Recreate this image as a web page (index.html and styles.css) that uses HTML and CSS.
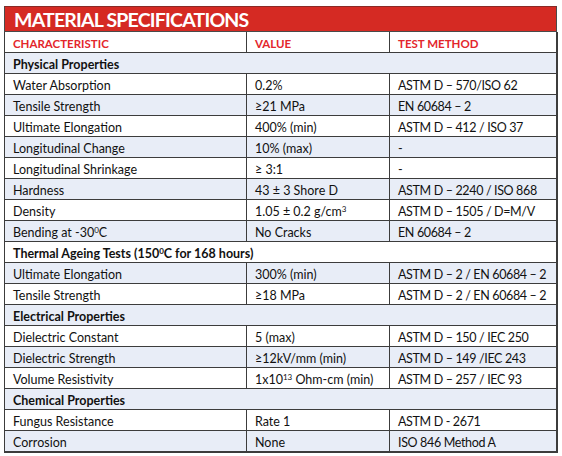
FILE: index.html
```html
<!DOCTYPE html>
<html>
<head>
<meta charset="utf-8">
<link rel="stylesheet" href="styles.css">
</head>
<body>
<div class="spec">
  <div class="title">MATERIAL SPECIFICATIONS</div>
  <div class="grid">
    <div class="cell head">CHARACTERISTIC</div><div class="cell head">VALUE</div><div class="cell head last">TEST METHOD</div>

    <div class="cell section blue">Physical Properties</div>
    <div class="cell">Water Absorption</div><div class="cell">0.2%</div><div class="cell last">ASTM D – 570/ISO 62</div>
    <div class="cell blue">Tensile Strength</div><div class="cell blue">≥21 MPa</div><div class="cell blue last">EN 60684 – 2</div>
    <div class="cell">Ultimate Elongation</div><div class="cell">400% (min)</div><div class="cell last">ASTM D – 412 / ISO 37</div>
    <div class="cell blue">Longitudinal Change</div><div class="cell blue">10% (max)</div><div class="cell blue last">-</div>
    <div class="cell">Longitudinal Shrinkage</div><div class="cell">≥ 3:1</div><div class="cell last">-</div>
    <div class="cell blue">Hardness</div><div class="cell blue">43 ± 3 Shore D</div><div class="cell blue last">ASTM D – 2240 / ISO 868</div>
    <div class="cell">Density</div><div class="cell">1.05 ± 0.2 g/cm<sup>3</sup></div><div class="cell last">ASTM D – 1505 / D=M/V</div>
    <div class="cell blue">Bending at -30<sup>0</sup>C</div><div class="cell blue">No Cracks</div><div class="cell blue last">EN 60684 – 2</div>

    <div class="cell section">Thermal Ageing Tests (150<sup>0</sup>C for 168 hours)</div>
    <div class="cell blue">Ultimate Elongation</div><div class="cell blue">300% (min)</div><div class="cell blue last">ASTM D – 2 / EN 60684 – 2</div>
    <div class="cell">Tensile Strength</div><div class="cell">≥18 MPa</div><div class="cell last">ASTM D – 2 / EN 60684 – 2</div>

    <div class="cell section blue">Electrical Properties</div>
    <div class="cell">Dielectric Constant</div><div class="cell">5 (max)</div><div class="cell last">ASTM D – 150 / IEC 250</div>
    <div class="cell blue">Dielectric Strength</div><div class="cell blue">≥12kV/mm (min)</div><div class="cell blue last">ASTM D – 149 /IEC 243</div>
    <div class="cell">Volume Resistivity</div><div class="cell">1x10<sup>13</sup> Ohm-cm (min)</div><div class="cell last">ASTM D – 257 / IEC 93</div>

    <div class="cell section blue">Chemical Properties</div>
    <div class="cell">Fungus Resistance</div><div class="cell">Rate 1</div><div class="cell last">ASTM D - 2671</div>
    <div class="cell blue bottom">Corrosion</div><div class="cell blue bottom">None</div><div class="cell blue last bottom">ISO 846 Method A</div>
  </div>
</div>
</body>
</html>
```

FILE: styles.css
```css
* { box-sizing: border-box; }
html, body { margin: 0; padding: 0; background: #ffffff; }
body {
  font-family: Lato, "Open Sans", "Liberation Sans", sans-serif;
  color: #111111;
}
.spec {
  margin: 6px 0 0 4px;
  width: 553px;
}
.title {
  height: 26px;
  background: #d52a23;
  color: #ffffff;
  font-weight: 700;
  font-size: 19.5px;
  letter-spacing: -0.8px;
  line-height: 25px;
  padding-left: 9px;
  border: 1px solid #4a4a4a;
  border-top-color: #8a2a26;
}
.grid {
  display: grid;
  grid-template-columns: 242px 143px 168px;
  border-left: 1px solid #3c3c3c;
}
.cell {
  height: 21px;
  line-height: 21px;
  padding-top: 1px;
  font-size: 12.5px;
  padding-left: 8px;
  border-right: 1px solid #3c3c3c;
  border-bottom: 1px solid #3c3c3c;
  white-space: nowrap;
  background: #ffffff;
}
.cell.last {
  border-right: 2px solid #3c3c3c;
  letter-spacing: -0.35px;
}
.blue { background: #e8edf7 !important; }
.head {
  color: #e3262c;
  font-weight: 700;
  font-size: 11.5px;
}
.cell.head.last { letter-spacing: 0; }
.section {
  grid-column: 1 / 4;
  font-weight: 700;
  border-right: 2px solid #3c3c3c;
}
.bottom { border-bottom: 2px solid #3c3c3c; height: 22px; }
sup {
  font-size: 8px;
  line-height: 0;
  vertical-align: 4px;
}
```
